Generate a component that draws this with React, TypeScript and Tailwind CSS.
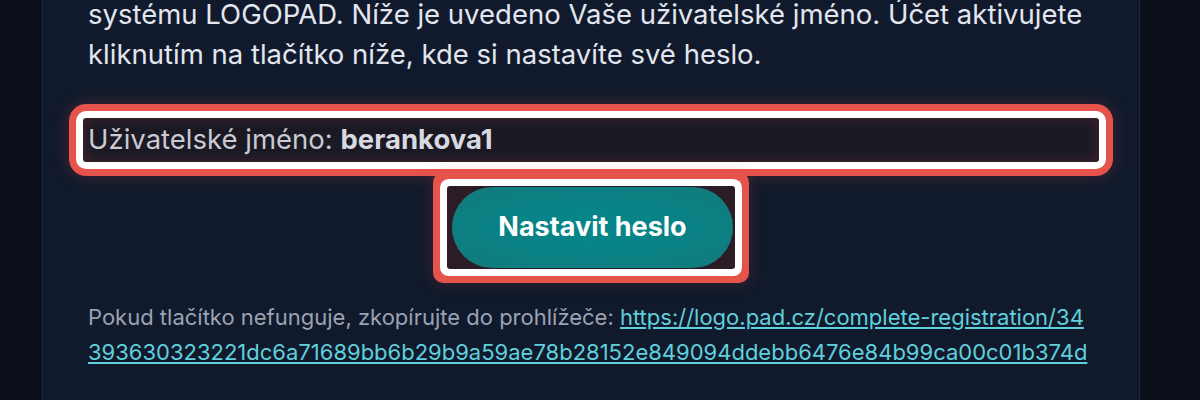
import React from "react";

export default function App() {
  return (
    <div
      className="w-[1200px] h-[400px] overflow-hidden bg-[#0b101b] flex pl-[42px]"
      style={{ fontFamily: "Inter, 'Noto Sans', sans-serif" }}
    >
      <div className="w-[1098px] h-full border-x border-[#1c273b] bg-[#111a2c] px-[45px]">
        <p className="-mt-[6px] text-[27.5px] leading-[40px] text-[#e2e6ee] whitespace-nowrap">
          <span className="block">systému LOGOPAD. Níže je uvedeno Vaše uživatelské jméno. Účet aktivujete</span>
          <span className="block">kliknutím na tlačítko níže, kde si nastavíte své heslo.</span>
        </p>

        <div className="mt-[44px] -mx-[5px] relative">
          <div className="h-[44px] px-[5px] flex items-center bg-[#1a1924] border-[7px] border-white box-content -m-[7px] shadow-[0_0_0_7px_#e5534b,0_0_14px_9px_rgba(229,83,75,0.18),inset_0_0_14px_rgba(229,83,75,0.22)] rounded-[10px]">
            <span className="text-[27.5px] text-[#c9cad2] whitespace-nowrap">
              Uživatelské jméno: <b className="font-bold text-[#d9dae0]">berankova1</b>
            </span>
          </div>
        </div>

        <div className="mt-[24px] flex justify-center">
          <div className="relative pl-[4px] pr-[2px] py-[1px] bg-[#2b1c26] rounded-[3px] shadow-[0_0_0_7px_white,0_0_0_14px_#e5534b,0_0_14px_16px_rgba(229,83,75,0.15)]">
            <div className="w-[281px] h-[81px] rounded-full bg-[radial-gradient(ellipse_at_center,#05878c_0%,#0b8083_60%,#15797b_100%)] flex items-center justify-center text-white font-bold text-[27px] ml-[1px] whitespace-nowrap">
              Nastavit heslo
            </div>
          </div>
        </div>

        <div className="mt-[31px] text-[22px] leading-[35px] text-[#9aa3b3] whitespace-nowrap">
          <span className="block">
            Pokud tlačítko nefunguje, zkopírujte do prohlížeče:{" "}
            <a className="text-[#5fd0dc] underline">https://logo.pad.cz/complete-registration/34</a>
          </span>
          <span className="block">
            <a className="text-[#5fd0dc] underline">393630323221dc6a71689bb6b29b9a59ae78b28152e849094ddebb6476e84b99ca00c01b374d</a>
          </span>
        </div>
      </div>
    </div>
  );
}
